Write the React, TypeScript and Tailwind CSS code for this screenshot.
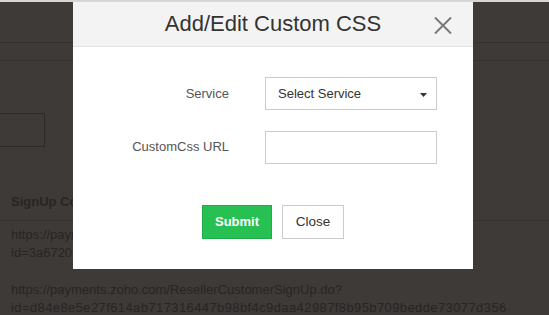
const font = { fontFamily: '"Liberation Sans", Arial, sans-serif' }

function PageBehind() {
  return (
    <div className="text-[13px] text-[#282523]">
      <div className="h-[2px] bg-[#d6d6d6]" />
      <div className="h-[40px]" />
      <div className="h-[1px] bg-[#34302e]" />
      <div className="h-[17px]" />
      <div className="h-[1px] bg-[#383432]" />
      <div className="h-[52px]" />
      <div className="w-[45px] h-[34px] border border-[#2e2a28] border-l-0" />
      {/* only the part left of the modal is visible */}
      <div className="pt-[47px] pl-[11px] whitespace-nowrap font-bold leading-[15px]">SignUp Co</div>
      <div className="mt-[11px] h-[1px] bg-[#383432]" />
      <div className="pt-[5px] pl-[11px] whitespace-nowrap leading-[18px]">
        <div>https://paym</div>
        <div>id=3a6720</div>
      </div>
      <div className="pt-[19px] pl-[11px] leading-[18px]">
        <div>https://payments.zoho.com/ResellerCustomerSignUp.do?</div>
        <div className="tracking-[0.4px]">id=d84e8e5e27f614ab717316447b98bf4c9daa42987f8b95b709bedde73077d356</div>
      </div>
    </div>
  )
}

function Modal() {
  return (
    <div className="absolute left-[73px] top-[2px] w-[400px] h-[267px] bg-white">
      <div className="relative h-[45px] bg-[#f3f3f3] border-b border-[#e3e3e3] flex items-center justify-center">
        <h2 className="text-[22px] text-[#333] leading-none">Add/Edit Custom CSS</h2>
        <button className="absolute right-[21px] top-[15px] w-[18px] h-[17px] text-[#787878]">
          <svg viewBox="0 0 18 17" className="w-[18px] h-[17px]" fill="none" stroke="currentColor" strokeWidth="2">
            <path d="M1 0.5 L17 16.5 M17 0.5 L1 16.5" />
          </svg>
        </button>
      </div>

      <div className="pt-[30px] flex flex-col gap-[21px]">
        <div className="flex items-start">
          <label className="w-[156px] text-right text-[13px] text-[#555] pt-[7px]">Service</label>
          <div className="ml-[36px] w-[172px] h-[33px] border border-[#cbcbcb] flex items-center justify-between pl-[12px] pr-[9px] text-[13px] text-[#333]">
            <span>Select Service</span>
            <svg viewBox="0 0 7 4" className="w-[7px] h-[4px] mt-[2px] text-[#333]" fill="currentColor">
              <path d="M0 0 H7 L3.5 4 Z" />
            </svg>
          </div>
        </div>
        <div className="flex items-start">
          <label className="w-[156px] text-right text-[13px] text-[#555] pt-[6px]">CustomCss URL</label>
          <input className="ml-[36px] w-[172px] h-[33px] border border-[#cbcbcb] outline-none" />
        </div>
      </div>

      <div className="mt-[41px] flex justify-center gap-[10px]">
        <button className="w-[70px] h-[34px] bg-[#27c053] border border-[#1eae49] text-white font-bold text-[13px]">Submit</button>
        <button className="w-[62px] h-[34px] bg-white border border-[#cbcbcb] text-[#333] text-[13.5px]">Close</button>
      </div>
    </div>
  )
}

export default function App() {
  return (
    <div style={font} className="relative w-[549px] h-[315px] overflow-hidden bg-[#3e3a38]">
      <PageBehind />
      <Modal />
    </div>
  )
}
